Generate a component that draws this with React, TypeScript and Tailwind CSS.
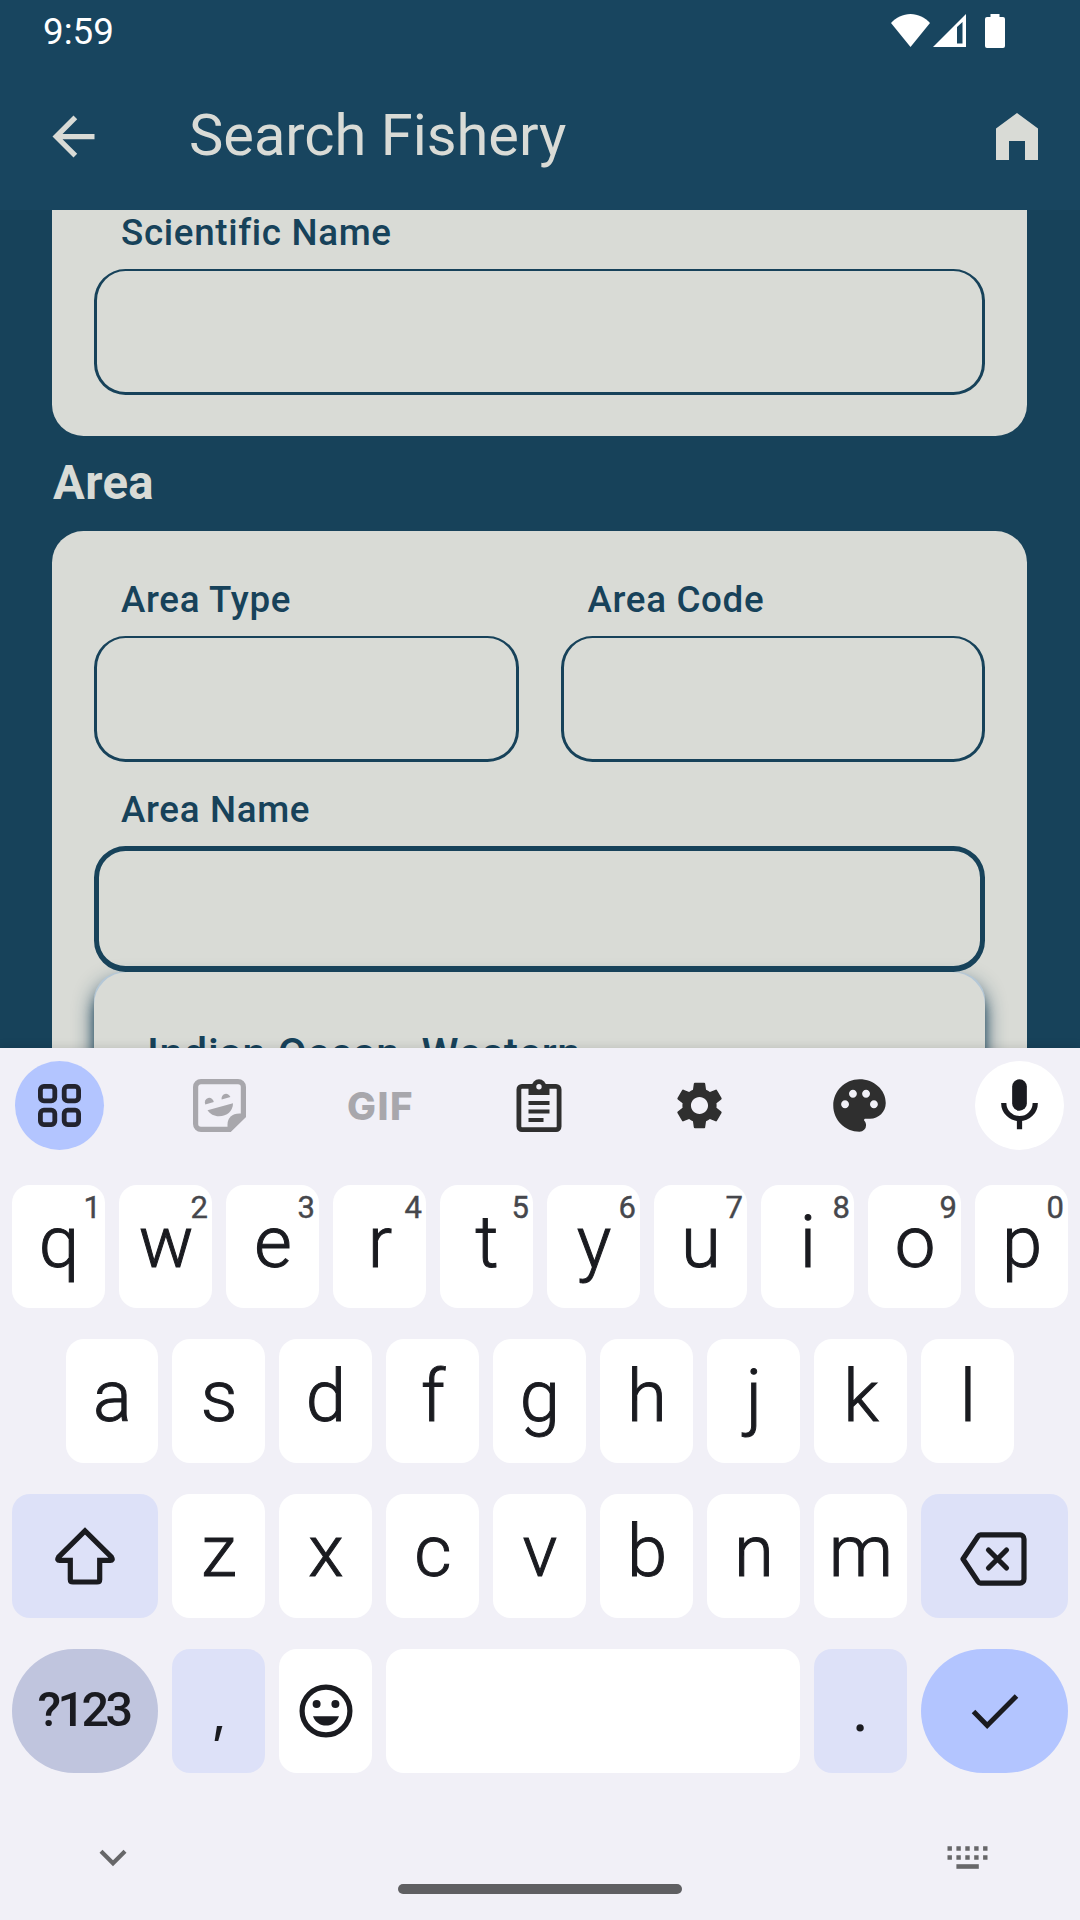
import type { ReactNode } from "react";
import { MdPalette, MdSettings } from "react-icons/md";

const INK = "#1a1b20";

function StatusBar() {
  return (
    <div className="flex h-[63px] items-start justify-between pl-[43px] pr-[75px] text-white">
      <span className="mt-[10px] text-[36.75px] leading-[43px]">9:59</span>
      <div className="mt-[14px] flex items-start">
        <svg width="39" height="33" viewBox="0 0 39 33" fill="currentColor">
          <path d="M19.5 33 0 9C5 3.500 12 0 19.500 0S34 3.500 39 9Z" />
        </svg>
        <svg className="ml-[3px]" width="33" height="33" viewBox="0 0 33 33" fill="currentColor">
          <path fillRule="evenodd" d="M33 0V33H0ZM24 13V29.500H29.500V8Z" />
        </svg>
        <svg className="ml-[19px]" width="20" height="34" viewBox="0 0 20 34" fill="currentColor">
          <path d="M5.500 0h9v3H18a2 2 0 0 1 2 2v27a2 2 0 0 1-2 2H2a2 2 0 0 1-2-2V5a2 2 0 0 1 2-2h3.500Z" />
        </svg>
      </div>
    </div>
  );
}

function AppBar() {
  return (
    <div className="flex h-[147px] items-center pl-[42px] pr-[42px] pb-[1px] text-[#d9dbd6]">
      <svg width="63" height="63" viewBox="0 0 24 24" fill="currentColor">
        <path d="M20 11H7.830l5.590-5.590L12 4l-8 8 8 8 1.410-1.410L7.830 13H20v-2z" />
      </svg>
      <h1 className="mb-[2px] ml-[84px] text-[57.75px] leading-[68px]">Search Fishery</h1>
      <svg className="ml-auto" width="42" height="47" viewBox="0 0 42 47" fill="currentColor">
        <path d="M21 0 42 15.500V47H29V28H13V47H0V15.500Z" />
      </svg>
    </div>
  );
}

function Field({ label, focused = false }: { label: string; focused?: boolean }) {
  return (
    <label className="flex min-w-0 flex-1 flex-col">
      <span className="pl-[27px] text-[36.75px] leading-[52.5px] font-medium tracking-[0.66px] whitespace-nowrap">
        {label}
      </span>
      <span
        className={
          focused
            ? "mt-[9.5px] h-[126px] rounded-[31.5px] border-[5px] border-b-[6px] border-[#17425a]"
            : "mt-[9.5px] h-[126px] rounded-[31.5px] border-[3px] border-t-[2px] border-[#17425a]"
        }
      />
    </label>
  );
}

function Form() {
  return (
    <main className="h-[838px] overflow-hidden bg-[#17425a] pr-[53px] pl-[52px] text-[#17425a]">
      <section className="flex h-[226px] rounded-b-[31.5px] bg-[#d9dbd6] px-[42px]">
        <div className="-mt-[3px] flex flex-1 [&_span:last-child]:mt-[9px]">
          <Field label="Scientific Name" />
        </div>
      </section>
      <h2 className="mt-[17px] mb-[18px] pl-[1px] text-[47.25px] leading-[60px] font-bold tracking-[0.4px] text-[#d9dbd6]">Area</h2>
      <section className="h-[600px] rounded-t-[31.5px] bg-[#d9dbd6] px-[42px] pt-[43px]">
        <div className="flex gap-[42px]">
          <Field label="Area Type" />
          <Field label="Area Code" />
        </div>
        <div className="mt-[21.5px] flex">
          <Field label="Area Name" focused />
        </div>
        <div className="h-[300px] rounded-[28px] bg-[#b4c7d6] shadow-[0_10px_20px_0_rgba(23,65,90,0.9),0_16px_10px_0px_rgba(23,65,90,0.6)]">
          <div className="h-full rounded-[33px] bg-[#d9dbd6] px-[53px] pt-[56.5px] text-[42px] leading-[52.5px] font-medium tracking-[0.66px] whitespace-nowrap">
            Indian Ocean, Western
          </div>
        </div>
      </section>
    </main>
  );
}

function Toolbar() {
  return (
    <div className="flex h-[89px] items-center justify-between pr-[16px] pl-[15px] text-[#2f2f2f]">
      <div className="flex size-[89px] items-center justify-center rounded-full bg-[#b3c5ff]">
        <svg width="43" height="43" viewBox="0 0 43 43" fill="none" stroke="#23242f" strokeWidth="4.8">
          <rect x="2.400" y="2.400" width="14.400" height="14.400" rx="3.500" />
          <rect x="26.200" y="2.400" width="14.400" height="14.400" rx="3.500" />
          <rect x="2.400" y="26.200" width="14.400" height="14.400" rx="3.500" />
          <rect x="26.200" y="26.200" width="14.400" height="14.400" rx="3.500" />
        </svg>
      </div>
      <div className="flex size-[89px] items-center justify-center text-[#a8a7ac]">
        <svg width="53" height="53" viewBox="0 0 53 53" fill="currentColor">
          <path d="M8 2.600H45a5.400 5.400 0 0 1 5.400 5.400V37L36.500 50.400H8A5.400 5.400 0 0 1 2.600 45V8A5.400 5.400 0 0 1 8 2.600Z" fill="none" stroke="currentColor" strokeWidth="5.200" />
          <path d="M53 34.500H46.500C39 34.500 34.500 39 34.500 45.500V53H37.500L53 37.500Z" />
          <path d="M12.300 25.400A4.500 4.500 0 1 1 20.800 22.900Z" />
          <path d="M28.700 20.600A4.500 4.500 0 1 1 37.400 18.100Z" />
          <path d="M14.500 31.300 40 24.300C40 32 34 37.300 26 37.300 21 37.300 17 35 14.500 31.300Z" />
        </svg>
      </div>
      <div className="flex size-[89px] items-center justify-center pt-[1px] pl-[2px] font-['Inter'] text-[38.5px] leading-none font-extrabold tracking-[1.5px] text-[#a8a7ac]">
        GIF
      </div>
      <div className="flex size-[89px] items-center justify-center">
        <svg className="mr-[1px]" width="46" height="53" viewBox="0 0 46 53" fill="none" stroke="currentColor" strokeWidth="4.800">
          <rect x="2.900" y="7.400" width="40.200" height="43.200" rx="3" />
          <circle cx="23" cy="7.500" r="7.200" fill="currentColor" stroke="none" />
          <path d="M12.500 5.500H33.500V16H12.500Z" fill="currentColor" stroke="none" />
          <circle cx="23" cy="7.800" r="2.700" fill="#f1f0f7" stroke="none" />
          <path d="M12.500 24H33.500M12.500 32.500H33.500M12.500 41H27.500" strokeWidth="4.200" />
        </svg>
      </div>
      <div className="flex size-[89px] items-center justify-center">
        <MdSettings size={57} />
      </div>
      <div className="flex size-[89px] items-center justify-center">
        <MdPalette size={63} />
      </div>
      <div className="flex size-[89px] items-center justify-center rounded-full bg-white text-[#1a1b20]">
        <svg width="63" height="63" viewBox="0 0 24 24" fill="none" stroke="currentColor" strokeWidth="2">
          <rect x="9.200" y="2" width="5.600" height="12" rx="2.800" fill="currentColor" stroke="none" />
          <path d="M6 11a6 6 0 0 0 12 0M12 17v4" />
        </svg>
      </div>
    </div>
  );
}

function Letter({ char, hint, narrow = false }: { char: string; hint?: string; narrow?: boolean }) {
  return (
    <div
      className={`relative flex h-full items-start justify-center rounded-[18px] bg-white ${narrow ? "w-[92px]" : "w-[93px]"}`}
    >
      <span className="mt-[15.5px] pl-[1px] text-[72.5px] leading-[84px] font-light [-webkit-text-stroke:1px_#1a1b20]">{char}</span>
      {hint && (
        <span className="absolute top-[5px] right-[4px] text-[31px] leading-[36px] text-[#46474c] [-webkit-text-stroke:0.4px_#46474c]">
          {hint}
        </span>
      )}
    </div>
  );
}

function Row({ children, className }: { children: ReactNode; className: string }) {
  return <div className={`flex gap-[14px] ${className}`}>{children}</div>;
}

function Keyboard() {
  return (
    <div className="relative flex h-[872px] flex-col bg-[#f1f0f7] pt-[13px] text-[#1a1b20] shadow-[0_0_10px_rgba(0,0,0,0.15)]">
      <Toolbar />
      <Row className="mt-[35px] h-[123px] px-[12px]">
        {[..."qwertyuiop"].map((c, i) => (
          <Letter key={c} char={c} hint={String((i + 1) % 10)} />
        ))}
      </Row>
      <Row className="mt-[31px] h-[124px] pl-[66px]">
        {[..."asdfghjkl"].map((c, i) => (
          <Letter key={c} char={c} narrow={i === 0} />
        ))}
      </Row>
      <Row className="mt-[31px] h-[124px] px-[12px]">
        <div className="flex w-[146px] items-center justify-center rounded-[18px] bg-[#dde1f8]">
          <svg width="60" height="58" viewBox="0 0 60 58" fill="none" stroke={INK} strokeWidth="5.200" strokeLinejoin="miter">
            <path d="M30 3.800 3.500 30.200Q1.500 33.600 5 33.400H15.300V52.400Q15.300 55 18 55H42Q44.700 55 44.700 52.400V33.400H55Q58.500 33.600 56.500 30.200Z" />
          </svg>
        </div>
        {[..."zxcvbnm"].map((c) => (
          <Letter key={c} char={c} />
        ))}
        <div className="flex w-[147px] items-center justify-center rounded-[18px] bg-[#dde1f8]">
          <svg className="mt-[5px] mr-[2px]" width="67" height="54" viewBox="0 0 67 54" fill="none" stroke={INK} strokeWidth="5.200" strokeLinejoin="round">
            <path d="M20.500 2.900H60A4 4 0 0 1 64 6.900V47.100A4 4 0 0 1 60 51.100H20.500Q19 51.100 18 49.600L3 27 18 4.400Q19 2.900 20.500 2.900Z" />
            <path d="M28.500 18 46.500 36M46.500 18 28.500 36" strokeLinecap="round" />
          </svg>
        </div>
      </Row>
      <Row className="mt-[31px] h-[124px] px-[12px]">
        <div className="flex w-[146px] items-center justify-center rounded-full bg-[#c0c5de] pr-[3px] pb-[1px] text-[48.5px] font-medium tracking-[-3.6px]">
          ?123
        </div>
        <div className="flex w-[93px] justify-center rounded-[18px] bg-[#dde1f8] pt-[28px] pl-[1px] font-['Inter'] text-[54px] leading-[72px]">,</div>
        <div className="flex w-[93px] items-center justify-center rounded-[18px] bg-white">
          <svg width="54" height="54" viewBox="0 0 54 54" fill={INK}>
            <circle cx="27" cy="27" r="23.900" fill="none" stroke={INK} strokeWidth="5.200" />
            <circle cx="17.600" cy="20" r="4" />
            <circle cx="36.400" cy="20" r="4" />
            <path d="M14 32.200H40C38 38 33 41.500 27 41.500S16 38 14 32.200Z" />
          </svg>
        </div>
        <div className="w-[414px] rounded-[18px] bg-white" />
        <div className="flex w-[93px] justify-center rounded-[18px] bg-[#dde1f8] pt-[17.5px] text-[66px] leading-[84px]">.</div>
        <div className="flex w-[147px] items-center justify-center rounded-full bg-[#b3c5ff]">
          <svg width="48" height="37" viewBox="0 0 48 37" fill="none" stroke={INK} strokeWidth="5">
            <path d="M2.500 18.500 16.200 32.500 45.500 3" />
          </svg>
        </div>
      </Row>
      <div className="mt-[72px] flex h-[26px] items-start justify-between pr-[92px] pl-[99px]">
        <svg className="mt-[4px]" width="28" height="18" viewBox="0 0 28 18" fill="none" stroke="#676769" strokeWidth="4.200">
          <path d="M2 2.300 14 14.200 26 2.300" />
        </svg>
        <svg width="41" height="25" viewBox="0 0 41 25" stroke="#676769" strokeWidth="4.600">
          <path d="M.5 3.500H41M.5 12.500H41" strokeDasharray="4.400 4.500" />
          <path d="M9.400 21.500H31.800" />
        </svg>
      </div>
      <div className="mt-[13px] ml-[398px] h-[10px] w-[284px] rounded-full bg-[#5f5f62]" />
    </div>
  );
}

export default function App() {
  return (
    <div className="h-[1920px] w-[1080px] overflow-hidden font-['Roboto',sans-serif]">
      <header className="h-[210px] bg-[#18455f]">
        <StatusBar />
        <AppBar />
      </header>
      <Form />
      <Keyboard />
    </div>
  );
}
